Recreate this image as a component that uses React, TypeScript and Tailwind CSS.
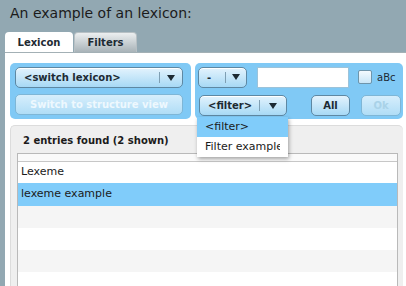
import { ReactNode } from 'react'

const Caret = () => (
  <svg width="8" height="6" viewBox="0 0 8 6" className="shrink-0">
    <path d="M0 0 L8 0 L4 6 Z" fill="#1d2a33" />
  </svg>
)

const SelectBox = ({ label, width, arrowWidth = 22 }: { label: string; width: string; arrowWidth?: number }) => (
  <div
    className={`${width} h-[21px] flex items-center rounded-[5px] border border-[#5e88a3] bg-gradient-to-b from-[#e3f3fd] to-[#a7d9f5] text-[10px] font-bold text-[#1d2a33] shadow-[inset_0_1px_0_#ffffff]`}
  >
    <span className="flex-1 pl-[8px] truncate">{label}</span>
    <span className="h-[11px] border-l border-[#7f9fb3]" />
    <span className="flex justify-center items-center" style={{ width: arrowWidth }}>
      <Caret />
    </span>
  </div>
)

const Button = ({ children, width, disabled }: { children: ReactNode; width: string; disabled?: boolean }) => (
  <div
    className={`${width} h-[21px] flex items-center justify-center rounded-[5px] border text-[10px] font-bold bg-gradient-to-b ${
      disabled
        ? 'border-[#7eb6d6] from-[#d6eefc] to-[#b0ddf6] text-[#eef8fe]'
        : 'border-[#5e88a3] from-[#e3f3fd] to-[#a7d9f5] text-[#1d2a33]'
    }`}
  >
    {children}
  </div>
)

export default function App() {
  return (
    <div
      className="w-[406px] h-[286px] overflow-hidden bg-[#92a8b2] flex flex-col text-[#222]"
      style={{ fontFamily: '"DejaVu Sans", Verdana, sans-serif' }}
    >
      <div className="shrink-0 h-[32px] pl-[10px] pt-[3px] text-[14px] leading-[20px] text-[#1b1b1b]">An example of an lexicon:</div>

      <div className="shrink-0 h-[20px] pl-[5px] flex items-end gap-[1px]">
        <div className="w-[68px] h-[20px] bg-white rounded-t-[4px] flex items-center justify-center text-[10px] font-bold text-[#1d2a33]">
          Lexicon
        </div>
        <div className="w-[63px] h-[20px] rounded-t-[4px] border border-b-0 border-[#b7c0c4] bg-gradient-to-b from-[#eceff0] to-[#a8b3b8] flex items-center justify-center text-[10px] font-bold text-[#1d2a33]">
          Filters
        </div>
      </div>

      <div className="relative flex-1 min-h-0 overflow-hidden ml-[5px] bg-white border-t border-[#a3b0b5] pl-[5px] pt-[10px] flex flex-col">
        <div className="shrink-0 flex gap-[4px]">
          <div className="w-[181px] h-[56px] rounded-[5px] bg-[#80c9f5] px-[5px] pt-[4px] flex flex-col gap-[6px]">
            <SelectBox label="<switch lexicon>" width="w-[168px]" />
            <Button width="w-[168px]" disabled>
              Switch to structure view
            </Button>
          </div>

          <div className="w-[208px] h-[56px] rounded-[5px] bg-[#80c9f5] pl-[3px] pt-[3px] flex flex-col gap-[7px]">
            <div className="flex items-center h-[22px]">
              <SelectBox label="-" width="w-[49px]" arrowWidth={20} />
              <div className="ml-[10px] w-[92px] h-[21px] bg-white border border-[#9cc3da]" />
              <div className="ml-[9px] w-[14px] h-[14px] rounded-[2px] border border-[#6f95ab] bg-gradient-to-b from-[#f4fafe] to-[#c9e6f7]" />
              <span className="ml-[5px] text-[10px] text-[#1d2a33]">aBc</span>
            </div>
            <div className="flex items-center">
              <div className="ml-[1px]">
                <SelectBox label="<filter>" width="w-[88px]" arrowWidth={26} />
              </div>
              <div className="ml-[24px]">
                <Button width="w-[39px]">All</Button>
              </div>
              <div className="ml-[11px]">
                <Button width="w-[40px]" disabled>
                  <span className="text-[#a9d2e8]">Ok</span>
                </Button>
              </div>
            </div>
          </div>
        </div>

        <div className="shrink-0 mt-[6px] mr-[3px] h-[180px] bg-[#efefef] border-l border-t border-[#dcdcdc] rounded-t-[5px] pl-[6px] pr-[5px] flex flex-col">
          <div className="shrink-0 h-[27px] pl-[6px] pt-[8px] text-[10px] font-bold text-[#1b1b1b] leading-[13px]">
            2 entries found (2 shown)
          </div>
          <div className="flex-1 bg-white border border-[#b9b9b9] flex flex-col text-[11px] text-[#1b1b1b]">
            <div className="shrink-0 h-[8px] border-b border-[#c7c7c7] bg-[#fafafa]" />
            <div className="shrink-0 h-[21px] flex items-center pl-[3px]">Lexeme</div>
            <div className="shrink-0 h-[23px] flex items-center pl-[3px] bg-[#80ccfa]">lexeme example</div>
            <div className="shrink-0 h-[22px] bg-[#f5f5f5]" />
            <div className="shrink-0 h-[22px] bg-white" />
            <div className="shrink-0 h-[22px] bg-[#f5f5f5]" />
            <div className="shrink-0 h-[22px] bg-white" />
          </div>
        </div>

        <div className="absolute left-[192px] top-[64px] w-[91px] bg-white shadow-[1px_2px_4px_rgba(0,0,0,0.35)] text-[11px] text-[#1b1b1b]">
          <div className="h-[20px] flex items-center pl-[8px] bg-[#80ccfa]">&lt;filter&gt;</div>
          <div className="h-[20px] flex items-center pl-[8px]">
            <span className="w-[75px] whitespace-nowrap overflow-hidden">Filter example</span>
          </div>
        </div>
      </div>
    </div>
  )
}
